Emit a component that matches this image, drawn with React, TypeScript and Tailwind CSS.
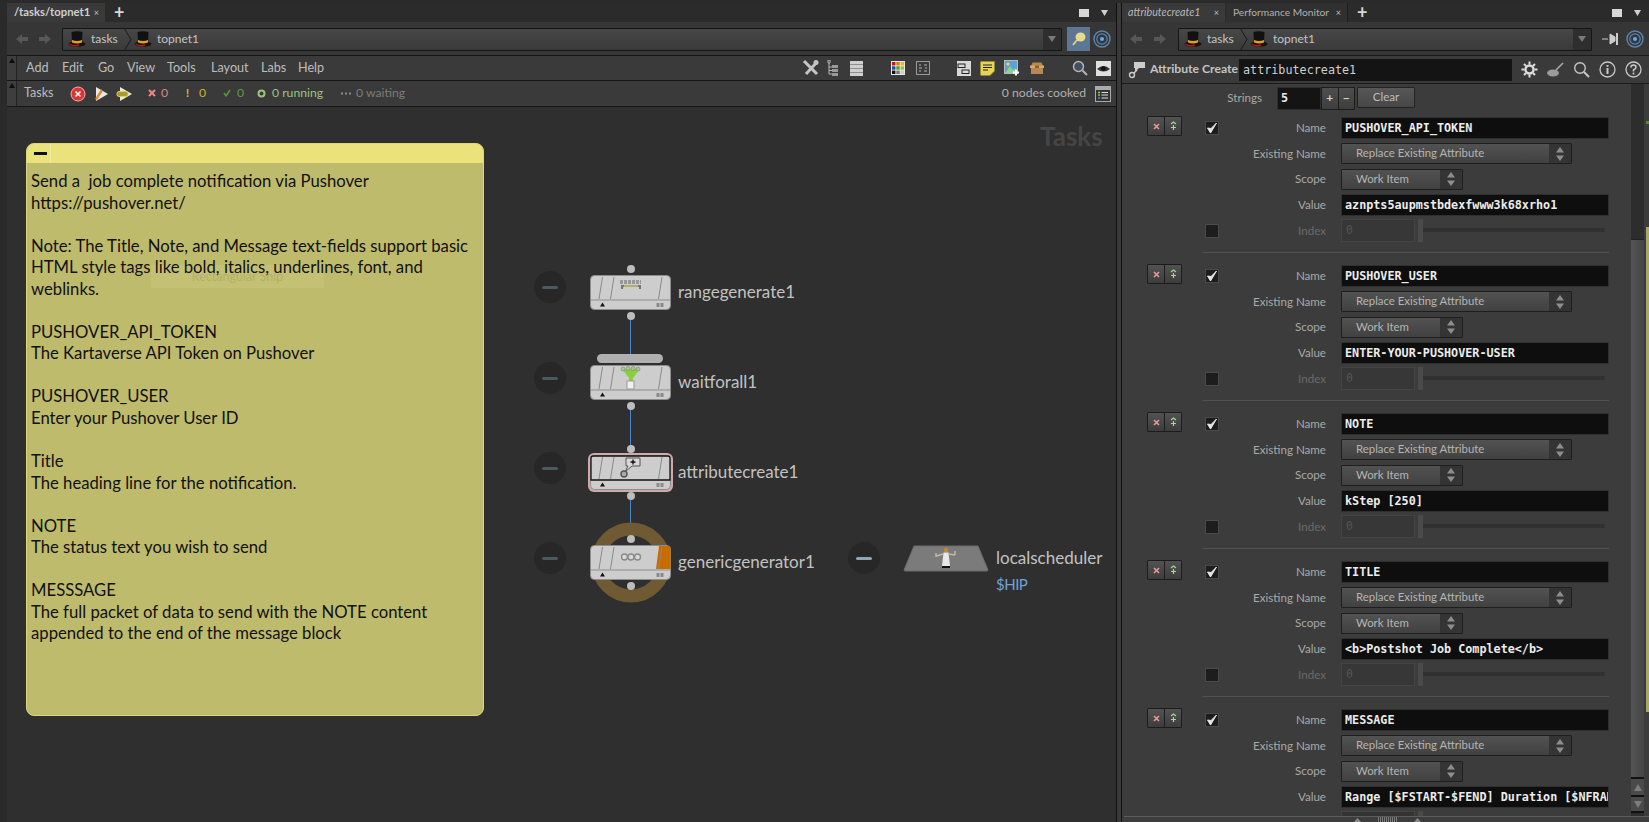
import React from "react";

const SANS = "font-['Lato',sans-serif]";
const MONO = "font-['DejaVu_Sans_Mono',monospace]";

const Hat = () => (
  <svg width="18" height="18" viewBox="0 0 18 18" className="shrink-0">
    <ellipse cx="9" cy="14" rx="8.5" ry="2.8" fill="#1a1210" />
    <path d="M3.5 2 Q9 0.5 14.5 2 L14 12 Q9 14 4 12 Z" fill="#111" />
    <path d="M4 10 Q9 12 14 10 L14 12.5 Q9 14.5 4 12.5 Z" fill="#e0a020" />
    <path d="M1.5 14 Q6 17 11 15" stroke="#a02020" strokeWidth="1.5" fill="none" />
  </svg>
);

const Arrow = ({ dir }: { dir: "l" | "r" }) => (
  <svg width="14" height="12" viewBox="0 0 14 12">
    <path d={dir === "l" ? "M1 6 L7 1 V4 H13 V8 H7 V11 Z" : "M13 6 L7 1 V4 H1 V8 H7 V11 Z"} fill="#575757" />
  </svg>
);

const PathBar = ({ cls }: { cls: string }) => (
  <div className={`${cls} h-[23px] flex items-center bg-gradient-to-b from-[#474747] to-[#3a3a3a] border border-[#151515] rounded-[1px]`}>
    <div className="flex items-center gap-[5px] pl-[5px] w-[60px]">
      <Hat />
      <span className="text-[12px] text-[#c4c4c4]">tasks</span>
    </div>
    <svg width="10" height="23" viewBox="0 0 10 23" className="shrink-0">
      <path d="M1 0 L8 11.5 L1 23" stroke="#1a1a1a" strokeWidth="1" fill="none" />
    </svg>
    <div className="flex items-center gap-[5px] pl-[1px] flex-1">
      <Hat />
      <span className="text-[12px] text-[#c4c4c4]">topnet1</span>
    </div>
    <div className="w-[18px] h-full bg-[#2e2e2e] flex items-center justify-center">
      <svg width="8" height="6" viewBox="0 0 8 6"><path d="M0 0 H8 L4 6 Z" fill="#7a7a7a" /></svg>
    </div>
  </div>
);

const Target = () => (
  <svg width="18" height="18" viewBox="0 0 18 18">
    <circle cx="9" cy="9" r="8" fill="none" stroke="#5d86ad" strokeWidth="1.4" />
    <circle cx="9" cy="9" r="5.2" fill="#2b3a4a" stroke="#5d86ad" strokeWidth="1.2" />
    <circle cx="9" cy="9" r="2" fill="#7aa6d0" />
  </svg>
);

const Close = () => <span className="text-[9px] leading-none text-[#bdbdbd]">×</span>;

const Handle = () => (
  <div className="w-[10px] h-full bg-[#3e3e3e] border-r border-[#222] flex justify-center pt-[2px]">
    <svg width="6" height="5" viewBox="0 0 6 5"><path d="M3 0 L6 5 H0 Z" fill="#0d0d0d" /></svg>
  </div>
);

const TabControls = () => (
  <div className="ml-auto flex items-center">
    <div className="w-[10px] h-[8px] bg-[#d8d8d8]" />
    <svg width="7" height="6" viewBox="0 0 7 6" className="ml-[12px] mr-[8px]"><path d="M0 0 H7 L3.5 6 Z" fill="#d0d0d0" /></svg>
  </div>
);

const Node = ({ x, y, orange, selected, children }: { x: number; y: number; orange?: boolean; selected?: boolean; children?: React.ReactNode }) => (
  <svg className="absolute" style={{ left: x - 3, top: y - 3 }} width="87" height="41" viewBox="-3 -3 87 41">
    {selected && <rect x="-2" y="-2" width="85" height="39" rx="6" fill="#d1a9aa" />}
    <rect x="0.5" y="0.5" width="80" height="34" rx="4" fill="#cdcdcd" stroke="#8d8d8d" />
    {orange && <path d="M69 1 H79 Q80.5 1 80.5 4 V24 H66 Z" fill="#c86c00" />}
    {selected ? (
      <path d="M1 25 V3 Q1 1 3 1 H78 Q80 1 80 3 V25 Z" fill="none" stroke="#111" strokeWidth="1.3" />
    ) : (
      <path d="M1 25 H80" stroke="#8d8d8d" strokeWidth="1" />
    )}
    <path d="M9 24 L12.5 2 M20.5 24 L24 2 M68.5 24 L72 2" stroke="#8a8a8a" strokeWidth="1" />
    <path d="M12.5 27.5 L15 31.5 H10 Z" fill="#111" />
    <path d="M66.5 28 H69.5 V32 H66.5 Z M70.5 28 H73.5 V32 H70.5 Z" fill="#8a8a8a" />
    {children}
  </svg>
);

const Dot = ({ y, x = 630.5 }: { y: number; x?: number }) => (
  <div className="absolute w-[8px] h-[8px] rounded-full bg-[#bdbdbd]" style={{ left: x - 4, top: y - 4 }} />
);

const Wire = ({ y1, y2 }: { y1: number; y2: number }) => (
  <div className="absolute w-[1px] bg-[#4a88cc]" style={{ left: 630, top: y1, height: y2 - y1 }} />
);

const Minus = ({ x, y, light }: { x: number; y: number; light?: boolean }) => (
  <div className="absolute w-[32px] h-[32px] rounded-full bg-[#272727] flex items-center justify-center" style={{ left: x - 16, top: y - 16 }}>
    <div className={`w-[16px] h-[3px] rounded-full ${light ? "bg-[#8ea6b4]" : "bg-[#4b5a60]"}`} />
  </div>
);

const NodeLabel = ({ x, y, children }: { x: number; y: number; children: React.ReactNode }) => (
  <div className="absolute text-[17px] leading-[20px] whitespace-nowrap text-[#c2c2c2]" style={{ left: x, top: y - 10 }}>
    {children}
  </div>
);

const noteLines = [
  "Send a  job complete notification via Pushover",
  "https://pushover.net/",
  "",
  "Note: The Title, Note, and Message text-fields support basic",
  "HTML style tags like bold, italics, underlines, font, and",
  "weblinks.",
  "",
  "PUSHOVER_API_TOKEN",
  "The Kartaverse API Token on Pushover",
  "",
  "PUSHOVER_USER",
  "Enter your Pushover User ID",
  "",
  "Title",
  "The heading line for the notification.",
  "",
  "NOTE",
  "The status text you wish to send",
  "",
  "MESSSAGE",
  "The full packet of data to send with the NOTE content",
  "appended to the end of the message block",
];

const Label = ({ children, dim }: { children: React.ReactNode; dim?: boolean }) => (
  <div className={`w-[107px] text-right text-[11.6px] ${dim ? "text-[#6a6a6a]" : "text-[#a9a9a9]"}`}>{children}</div>
);

const Lead = ({ buttons, box }: { buttons?: boolean; box?: "check" | "empty" }) => (
  <>
    <div className="w-[83px] h-full flex items-center pl-[25px]">
      {buttons && (
        <div className="flex h-[20px] w-[35px] mt-[-4px] border border-[#1c1c1c] rounded-[1px] bg-gradient-to-b from-[#525252] to-[#3d3d3d]">
          <div className="flex-1 border-r border-[#1c1c1c] flex items-center justify-center">
            <svg width="7" height="7" viewBox="0 0 7 7"><path d="M1 1 L6 6 M6 1 L1 6" stroke="#e89a9a" strokeWidth="1.6" /></svg>
          </div>
          <div className="flex-1 flex items-center justify-center">
            <svg width="7" height="10" viewBox="0 0 7 10"><path d="M1 3 L3.5 1 L6 3 M3.5 4 V9 M1 6.5 H6" stroke="#a8d89a" strokeWidth="1.2" fill="none" /></svg>
          </div>
        </div>
      )}
    </div>
    <div className="w-[14px] h-[14px] bg-[#1d1d1d] border border-[#4a4a4a] flex items-center justify-center">
      {box === "check" && (
        <svg width="12" height="12" viewBox="0 0 12 12"><path d="M1.5 6 L4.5 11 L10.5 1 L5 6.5 Z" fill="#e6e6e6" stroke="#e6e6e6" /></svg>
      )}
    </div>
  </>
);

const Select = ({ w, text }: { w: string; text: string }) => (
  <div className={`${w} h-[21px] flex bg-gradient-to-b from-[#525252] to-[#414141] border border-[#1e1e1e] rounded-[1px]`}>
    <div className="flex-1 pl-[14px] text-[11.4px] leading-[18px] text-[#b5b5b5] whitespace-nowrap">{text}</div>
    <div className="w-[22px] bg-[#343434] flex items-center justify-center">
      <svg width="8" height="14" viewBox="0 0 8 14"><path d="M4 0 L8 5.5 H0 Z M4 14 L8 8.5 H0 Z" fill="#8e8e8e" /></svg>
    </div>
  </div>
);

const ParmBlock = ({ name, value, last }: { name: string; value: string; last?: boolean }) => (
  <div className="h-[148px] shrink-0">
    <div className="h-[26px] flex items-center">
      <Lead buttons box="check" />
      <Label>Name</Label>
      <div className={`ml-[15px] w-[268px] h-[22px] bg-[#0e0e0e] border border-[#303030] pl-[3px] ${MONO} font-bold text-[11.75px] leading-[20px] text-[#ececec]`}>{name}</div>
    </div>
    <div className="h-[25px] flex items-center">
      <div className="w-[97px]" />
      <Label>Existing Name</Label>
      <div className="ml-[15px]"><Select w="w-[231px]" text="Replace Existing Attribute" /></div>
    </div>
    <div className="h-[26px] flex items-center">
      <div className="w-[97px]" />
      <Label>Scope</Label>
      <div className="ml-[15px]"><Select w="w-[122px]" text="Work Item" /></div>
    </div>
    <div className="h-[26px] flex items-center">
      <div className="w-[97px]" />
      <Label>Value</Label>
      <div className={`ml-[15px] w-[268px] h-[22px] bg-[#0e0e0e] border border-[#303030] pl-[3px] overflow-hidden whitespace-nowrap ${MONO} font-bold text-[11.75px] leading-[20px] text-[#ececec]`}>{value}</div>
    </div>
    {last ? (
      <div className="h-[25px] flex items-center">
        <div className="ml-[219px] w-[74px] h-[23px] bg-[#333] border border-[#444]" />
        <div className="ml-[3px] w-[5px] h-[23px] bg-[#4a4a4a]" />
      </div>
    ) : (
      <>
        <div className="h-[25px] flex items-center">
          <Lead box="empty" />
          <Label dim>Index</Label>
          <div className={`ml-[15px] w-[74px] h-[23px] bg-[#373737] border border-[#444] pl-[4px] ${MONO} text-[11.4px] leading-[21px] text-[#555]`}>0</div>
          <div className="relative ml-[3px] h-[23px] w-[188px]">
            <div className="absolute left-[2px] right-[1px] top-[9px] h-[4px] rounded-full bg-[#313131]" />
            <div className="absolute left-0 top-0 w-[5px] h-[23px] bg-[#4a4a4a]" />
          </div>
        </div>
        <div className="ml-[81px] w-[406px] mt-[9px] border-t border-[#515151]" />
      </>
    )}
  </div>
);

const ToolIcons = () => (
  <div className="ml-auto flex items-center h-full">
    <svg width="18" height="18" viewBox="0 0 18 18" className="mr-[7px]"><path d="M2 2 L15 15 M15 3 L4 15" stroke="#c5c5c5" strokeWidth="3" /><circle cx="14" cy="3.5" r="2.5" fill="#c5c5c5" /></svg>
    <svg width="12" height="16" viewBox="0 0 12 16" className="mr-[11px]"><path d="M1 0 H3 V3 H1 Z M2 3 V14 H5 M2 7 H5 M2 10.5 H5" stroke="#b5b5b5" fill="none" /><path d="M5 5 H11 V8 H5 Z M5 9 H11 V12 H5 Z M5 13 H11 V16 H5 Z" fill="#9a9a9a" /></svg>
    <div className="w-[13px] h-[15px] mr-[28px] bg-[repeating-linear-gradient(180deg,#d0d0d0_0,#d0d0d0_3px,#8f8f8f_3px,#8f8f8f_4px)]" />
    <svg width="14" height="14" viewBox="0 0 14 14" className="mr-[11px]">
      <rect width="14" height="14" fill="#e8e8e8" />
      <rect x="1" y="1" width="3.4" height="3.4" fill="#c01818" /><rect x="5.3" y="1" width="3.4" height="3.4" fill="#e07a10" /><rect x="9.6" y="1" width="3.4" height="3.4" fill="#e0c010" />
      <rect x="1" y="5.3" width="3.4" height="3.4" fill="#2050a0" /><rect x="5.3" y="5.3" width="3.4" height="3.4" fill="#50a030" /><rect x="9.6" y="5.3" width="3.4" height="3.4" fill="#a0c030" />
      <rect x="1" y="9.6" width="3.4" height="3.4" fill="#111" /><rect x="5.3" y="9.6" width="3.4" height="3.4" fill="#777" /><rect x="9.6" y="9.6" width="3.4" height="3.4" fill="#ccc" />
    </svg>
    <svg width="14" height="14" viewBox="0 0 14 14" className="mr-[27px]"><rect x="0.5" y="0.5" width="13" height="13" fill="#3a3a3a" stroke="#9a9a9a" /><path d="M3 4 H5 M8 4 H11 M3 7 H6 M9 7 H11 M3 10 H5 M8 10 H11" stroke="#b5b5b5" /></svg>
    <svg width="14" height="15" viewBox="0 0 14 15" className="mr-[9px]"><rect width="14" height="15" fill="#d8d8d8" /><rect x="1" y="3" width="7" height="3.5" fill="#d8d8d8" stroke="#222" /><rect x="5" y="9" width="7" height="3.5" fill="#d8d8d8" stroke="#222" /></svg>
    <svg width="15" height="15" viewBox="0 0 15 15" className="mr-[9px]"><path d="M0.5 1.5 Q0.5 0.5 1.5 0.5 H14.5 V10 L10 14.5 H1.5 Q0.5 14.5 0.5 13.5 Z" fill="#e6d55a" stroke="#9a8c30" /><path d="M3 4 H12 M3 6.5 H12 M3 9 H8" stroke="#222" strokeWidth="1.2" /></svg>
    <svg width="16" height="16" viewBox="0 0 16 16" className="mr-[9px]"><rect x="0.5" y="0.5" width="13" height="13" fill="#5ea0d0" stroke="#bbb" /><path d="M1 13 L6 6 L9 10 L11 8 L13 13 Z" fill="#8fcf90" /><circle cx="4" cy="4" r="1.6" fill="#f0e050" /><path d="M12 9.5 V15.5 M9 12.5 H15" stroke="#fff" strokeWidth="2" /></svg>
    <svg width="16" height="13" viewBox="0 0 16 13" className="mr-[27px]"><path d="M2 4 L3.5 0.5 H12.5 L14 4 V12 H2 Z" fill="#b98850" /><path d="M1 3.5 H15 V6 H1 Z" fill="#d8a868" /><rect x="6" y="3.5" width="4" height="2.5" fill="#8a6030" /></svg>
    <svg width="16" height="16" viewBox="0 0 16 16" className="mr-[8px]"><circle cx="6.5" cy="6.5" r="5" fill="#405060" stroke="#b5b5b5" strokeWidth="1.5" /><path d="M10.5 10.5 L15 15" stroke="#b5b5b5" strokeWidth="2" /></svg>
    <svg width="15" height="15" viewBox="0 0 15 15" className="mr-[5px]"><rect width="15" height="15" fill="#e0e0e0" /><path d="M1 8 Q7.5 2 14 8 Q7.5 13 1 8 Z" fill="#333" /><circle cx="7.5" cy="7.5" r="2.2" fill="#111" /></svg>
  </div>
);

export default function App() {
  return (
    <div className={`${SANS} w-[1649px] h-[822px] bg-[#2a2a2a] flex overflow-hidden pt-[3px] pl-[7px]`}>
      {/* Left pane */}
      <div className="w-[1110px] h-full flex flex-col shrink-0 border-r border-[#0f0f0f]">
        <div className="h-[19px] bg-[#2b2b2b] flex items-stretch shrink-0">
          <div className="w-[98px] bg-[#3a3a3a] flex items-center pl-[7px] pr-[6px] justify-between">
            <span className="text-[11.3px] text-[#d0d0d0] font-bold whitespace-nowrap">/tasks/topnet1</span>
            <Close />
          </div>
          <span className="ml-[9px] text-[18px] leading-[18px] font-bold text-[#d8d8d8]">+</span>
          <TabControls />
        </div>
        <div className="h-[33px] bg-[#363636] flex items-center shrink-0 pt-[1px]">
          <div className="w-[55px] pl-[8px] flex gap-[9px] shrink-0"><Arrow dir="l" /><Arrow dir="r" /></div>
          <PathBar cls="w-[1000px]" />
          <div className="ml-[5px] w-[23px] h-[24px] bg-[#5c7693] flex items-center justify-center shrink-0">
            <svg width="16" height="16" viewBox="0 0 16 16"><ellipse cx="9.5" cy="6" rx="5" ry="4.5" fill="#e6dc8a" /><path d="M6 9 L2 14" stroke="#d8cf80" strokeWidth="2" /></svg>
          </div>
          <div className="ml-[3px]"><Target /></div>
        </div>
        <div className="h-[26px] bg-[#3a3a3a] border-y border-[#151515] flex items-center shrink-0">
          <Handle />
          <div className="flex text-[12.6px] text-[#bdbdbd] h-full items-center">
            <span className="ml-[9px] w-[36px]">Add</span>
            <span className="w-[36px]">Edit</span>
            <span className="w-[29px]">Go</span>
            <span className="w-[40px]">View</span>
            <span className="w-[44px]">Tools</span>
            <span className="w-[50px]">Layout</span>
            <span className="w-[37px]">Labs</span>
            <span>Help</span>
          </div>
          <ToolIcons />
        </div>
        <div className="h-[26px] bg-[#3a3a3a] border-b border-[#151515] flex items-center shrink-0">
          <Handle />
          <span className="ml-[7px] w-[46px] text-[12.6px] text-[#bdbdbd]">Tasks</span>
          <svg width="16" height="16" viewBox="0 0 16 16"><circle cx="8" cy="8" r="7" fill="#d33" stroke="#f5b0b0" /><path d="M5.5 5.5 L10.5 10.5 M10.5 5.5 L5.5 10.5" stroke="#fff" strokeWidth="1.5" /></svg>
          <svg width="16" height="16" viewBox="0 0 16 16" className="ml-[7px]"><path d="M3 1 L15 8 L3 15 Z" fill="#e8e8e8" /><path d="M2 13 L8 3 L10 5 L4 14 Z" fill="#e08a30" /></svg>
          <svg width="17" height="16" viewBox="0 0 17 16" className="ml-[7px]"><path d="M4 1 L16 8 L4 15 Z" fill="#e8e8e8" /><rect x="1" y="5.5" width="11" height="5" rx="2" fill="#a89a30" stroke="#e0d050" /></svg>
          <div className="flex items-center text-[12.2px] ml-[15px]">
            <svg width="8" height="8" viewBox="0 0 8 8" className="mr-[2px]"><path d="M1 1 L7 7 M7 1 L1 7" stroke="#e88" strokeWidth="2" /></svg>
            <span className="text-[#d78888] ml-[3px] w-[25px]">0</span>
            <span className="text-[#d8c020] text-[11px] font-bold w-[10px]">!</span>
            <span className="text-[#c8b428] ml-[3px] w-[24px]">0</span>
            <svg width="8" height="8" viewBox="0 0 8 8" className="mr-[2px]"><path d="M1 4 L3 7 L7 1" stroke="#5c9a38" strokeWidth="1.4" fill="none" /></svg>
            <span className="text-[#5c9a38] ml-[4px] w-[20px]">0</span>
            <svg width="9" height="9" viewBox="0 0 9 9"><circle cx="4.5" cy="4.5" r="3" fill="none" stroke="#9cc47a" strokeWidth="2" /></svg>
            <span className="text-[#9cc47a] ml-[6px] w-[69px]">0 running</span>
            <svg width="10" height="3" viewBox="0 0 10 3" className="mr-[5px]"><path d="M0 1.5 H10" stroke="#8a8a8a" strokeWidth="2" strokeDasharray="2 2" /></svg>
            <span className="text-[#7d7d7d]">0 waiting</span>
          </div>
          <span className="ml-auto text-[12.2px] text-[#b0b0b0]">0 nodes cooked</span>
          <svg width="16" height="16" viewBox="0 0 16 16" className="ml-[9px] mr-[5px]"><rect x="0.5" y="0.5" width="15" height="15" fill="#333" stroke="#aaa" /><rect x="1" y="1" width="14" height="3" fill="#aaa" /><path d="M3 6.5 H5 M3 9 H5" stroke="#8c4" strokeWidth="1.4" /><path d="M3 12 H5" stroke="#48c" strokeWidth="1.4" /><path d="M6.5 6.5 H13 M6.5 9 H13 M6.5 12 H13" stroke="#ddd" strokeWidth="1.2" /></svg>
        </div>

        {/* Network canvas */}
        <div className="relative flex-1 bg-[#2f2f2f] overflow-hidden">
          <div className="absolute inset-0" style={{ transform: "translate(-7px,-108px)" }}>
            <div className="absolute left-[1040px] top-[122px] text-[26px] leading-[30px] font-bold text-[#454545]">Tasks</div>

            {/* Sticky note */}
            <div className="absolute left-[26px] top-[144px] w-[458px] h-[573px] rounded-[8px] overflow-hidden bg-[#bfbb6c] border border-[#dcd77a]">
              <div className="h-[19px] bg-[#ece27c] flex items-center">
                <div className="w-[24px] h-full border-r border-[#f3ec9c] flex items-center justify-center">
                  <div className="w-[13px] h-[3px] bg-[#111] ml-[3px]" />
                </div>
              </div>
              <div className="absolute left-[124px] top-[121px] w-[173px] h-[23px] bg-[#c4c174] text-center text-[12.5px] leading-[23px] text-[#b3b068]">Rectangular Snip</div>
              <div className="relative pl-[4px] pt-[8px] text-[16.7px] leading-[21.55px] text-[#111]">
                {noteLines.map((l, i) => (
                  <div key={i} className="h-[21.55px] whitespace-pre">{l}</div>
                ))}
              </div>
            </div>

            {/* Wires */}
            <Wire y1={317} y2={356} />
            <Wire y1={407} y2={450} />
            <Wire y1={497} y2={540} />

            {/* Ring behind generic generator */}
            <svg className="absolute" style={{ left: 590, top: 523 }} width="82" height="82" viewBox="0 0 82 82">
              <circle cx="41" cy="40.5" r="33.5" fill="none" stroke="#6f5a34" strokeWidth="13" />
            </svg>

            <Minus x={550} y={288} />
            <Minus x={550} y={379} />
            <Minus x={550} y={469} />
            <Minus x={550} y={559} />
            <Minus x={864} y={559} light />

            <Dot y={270} />
            <Node x={590} y={276}>
              <path d="M30 7 H51" stroke="#999" strokeWidth="4" strokeDasharray="3 1" />
              <path d="M32 14 V11 H50 V14" stroke="#777" strokeWidth="2" fill="none" />
              <path d="M34 11 H48" stroke="#c5c070" strokeWidth="1.5" />
            </Node>
            <Dot y={317} />

            <div className="absolute left-[597px] top-[355px] w-[66px] h-[9px] rounded-full bg-[#b0b0b0]" />
            <Node x={590} y={366}>
              <path d="M32 4 H50 L43 13 V16 H39 V13 Z" fill="#8bcf3c" />
              <rect x="37" y="16" width="7" height="8" fill="#f0f0f0" stroke="#999" />
              <circle cx="33" cy="4" r="2" fill="#a6c88c" stroke="#777" strokeWidth="0.5" /><circle cx="38" cy="3.5" r="2" fill="#a6c88c" stroke="#777" strokeWidth="0.5" /><circle cx="43" cy="3.5" r="2" fill="#a6c88c" stroke="#777" strokeWidth="0.5" /><circle cx="48" cy="4" r="2" fill="#a6c88c" stroke="#777" strokeWidth="0.5" />
            </Node>
            <Dot y={407} />

            <Dot y={450} />
            <Node x={590} y={456} selected>
              <path d="M36 3 H50 V11 H42 L35 17 L38 11 H36 Z" fill="#d8d8d8" stroke="#555" />
              <path d="M43 4.5 V9.5 M40.5 7 H45.5" stroke="#111" strokeWidth="1.4" />
              <circle cx="34" cy="19" r="3" fill="#aaa" stroke="#555" strokeWidth="1.4" />
            </Node>
            <Dot y={497} />

            <Dot y={540} />
            <Node x={590} y={546} orange>
              <circle cx="34.5" cy="12" r="3" fill="#d8d8d8" stroke="#888" strokeWidth="1.3" />
              <circle cx="41" cy="12" r="3" fill="#d8d8d8" stroke="#888" strokeWidth="1.3" />
              <circle cx="47.5" cy="12" r="3" fill="#d8d8d8" stroke="#888" strokeWidth="1.3" />
            </Node>
            <Dot y={587} />

            <NodeLabel x={678} y={293}>rangegenerate1</NodeLabel>
            <NodeLabel x={678} y={383}>waitforall1</NodeLabel>
            <NodeLabel x={678} y={473}>attributecreate1</NodeLabel>
            <NodeLabel x={678} y={563}>genericgenerator1</NodeLabel>

            {/* Scheduler */}
            <svg className="absolute" style={{ left: 903, top: 546 }} width="86" height="27" viewBox="0 0 86 27">
              <path d="M11 1 H75 L85 25 Q85 26 83 26 H3 Q1 26 1 25 Z" fill="#7b7b7b" stroke="#6c6c6c" />
              <circle cx="43" cy="5" r="2.2" fill="#c88a30" />
              <path d="M40.5 7.5 H45.5 L47 21 H39 Z" fill="#e8e8e8" />
              <path d="M40.5 9 L33 11 M45.5 9 L52 10 M33 8 V12 M52 6 V10" stroke="#c9b8a0" strokeWidth="1.4" fill="none" />
              <path d="M39 21 H47 V23 H39 Z" fill="#111" />
            </svg>
            <NodeLabel x={996} y={559}>localscheduler</NodeLabel>
            <div className="absolute left-[996px] top-[575px] text-[15px] leading-[20px] tracking-[-0.5px] text-[#6ea3db]">$HIP</div>
          </div>
        </div>
      </div>

      {/* Gap between panes */}
      <div className="w-[5px] h-full bg-[#3a3a3a] border-r border-[#0f0f0f] shrink-0" />

      {/* Right pane */}
      <div className="w-[527px] h-full flex flex-col shrink-0">
        <div className="h-[19px] bg-[#2b2b2b] flex items-stretch shrink-0">
          <div className="w-[103px] bg-[#3a3a3a] flex items-center pl-[6px] pr-[6px] justify-between">
            <span className="text-[10.7px] italic text-[#b8b8b8] whitespace-nowrap">attributecreate1</span>
            <Close />
          </div>
          <div className="w-[122px] ml-[1px] bg-[#303030] border-r border-[#1d1d1d] flex items-center pl-[7px] pr-[6px] justify-between">
            <span className="text-[10.2px] text-[#b0b0b0] whitespace-nowrap">Performance Monitor</span>
            <Close />
          </div>
          <span className="ml-[9px] text-[18px] leading-[18px] font-bold text-[#d8d8d8]">+</span>
          <TabControls />
        </div>
        <div className="h-[33px] bg-[#363636] flex items-center shrink-0 pt-[1px]">
          <div className="w-[56px] pl-[7px] flex gap-[10px] shrink-0"><Arrow dir="l" /><Arrow dir="r" /></div>
          <PathBar cls="w-[414px]" />
          <svg width="18" height="14" viewBox="0 0 18 14" className="ml-[10px]"><path d="M0 7 H6 M8 2 L8 12 L13 9 V5 Z" stroke="#ccc" fill="#ccc" /><rect x="14" y="1" width="2" height="12" fill="#ccc" /></svg>
          <div className="ml-[6px]"><Target /></div>
        </div>
        <div className="h-[29px] bg-[#3a3a3a] border-y border-[#1a1a1a] flex items-center shrink-0">
          <svg width="20" height="20" viewBox="0 0 20 20" className="ml-[6px]"><path d="M6 2 H17 V8 H11 L7 12 V8 H6 Z" fill="#ccc" /><circle cx="4" cy="15" r="2.5" fill="none" stroke="#ccc" strokeWidth="1.4" /><path d="M6 13 L9 10" stroke="#ccc" strokeWidth="1.4" /></svg>
          <span className="ml-[2px] w-[89px] text-[12.2px] font-bold text-[#c4c4c4] whitespace-nowrap">Attribute Create</span>
          <div className={`w-[273px] h-[22px] bg-[#141414] pl-[4px] ${MONO} text-[11.75px] leading-[22px] text-[#d0d0d0]`}>attributecreate1</div>
          <div className="flex items-center ml-[9px] gap-[9px]">
            <svg width="17" height="17" viewBox="0 0 17 17"><circle cx="8.5" cy="8.5" r="4" fill="none" stroke="#ddd" strokeWidth="2.4" /><path d="M8.5 0.5 V3.5 M8.5 13.5 V16.5 M0.5 8.5 H3.5 M13.5 8.5 H16.5 M3 3 L5 5 M12 12 L14 14 M14 3 L12 5 M3 14 L5 12" stroke="#ddd" strokeWidth="2" /></svg>
            <svg width="17" height="17" viewBox="0 0 17 17"><ellipse cx="6" cy="12" rx="6" ry="3.5" fill="#9b9b9b" /><path d="M9 9 L16 2" stroke="#aaa" strokeWidth="1.6" /></svg>
            <svg width="17" height="17" viewBox="0 0 17 17"><circle cx="7" cy="7" r="5.3" fill="none" stroke="#c8c8c8" strokeWidth="1.4" /><path d="M11 11 L16 16" stroke="#c8c8c8" strokeWidth="2" /></svg>
            <svg width="17" height="17" viewBox="0 0 17 17"><circle cx="8.5" cy="8.5" r="7.5" fill="none" stroke="#c8c8c8" strokeWidth="1.3" /><path d="M8.5 7 V13 M8.5 4 V5.8" stroke="#c8c8c8" strokeWidth="2" /></svg>
            <svg width="17" height="17" viewBox="0 0 17 17"><circle cx="8.5" cy="8.5" r="7.5" fill="none" stroke="#c8c8c8" strokeWidth="1.3" /><path d="M6 6.5 Q6 4 8.5 4 Q11 4 11 6.3 Q11 7.8 8.5 9 V10.5 M8.5 11.5 V13.5" stroke="#c8c8c8" strokeWidth="1.6" fill="none" /></svg>
          </div>
        </div>

        <div className="relative flex-1 bg-[#3c3c3c] overflow-hidden">
          <div className="h-[31px] flex items-center pb-[3px]">
            <div className="w-[140px] text-right text-[11.6px] text-[#a9a9a9]">Strings</div>
            <div className={`ml-[15px] w-[44px] h-[23px] bg-[#141414] border border-[#2e2e2e] pl-[3px] ${MONO} font-bold text-[11.75px] leading-[21px] text-[#e8e8e8]`}>5</div>
            <div className="flex w-[34px] h-[23px] border border-[#1c1c1c] bg-gradient-to-b from-[#4e4e4e] to-[#3e3e3e] text-[12px] text-[#d0d0d0] font-bold leading-[20px] text-center">
              <div className="flex-1 border-r border-[#1c1c1c]">+</div>
              <div className="flex-1">−</div>
            </div>
            <div className="ml-[2px] w-[58px] h-[21px] mb-[2px] border border-[#222] rounded-[1px] bg-gradient-to-b from-[#575757] to-[#474747] text-center text-[11.6px] leading-[18px] text-[#bcbcbc]">Clear</div>
          </div>
          <ParmBlock name="PUSHOVER_API_TOKEN" value="aznpts5aupmstbdexfwww3k68xrho1" />
          <ParmBlock name="PUSHOVER_USER" value="ENTER-YOUR-PUSHOVER-USER" />
          <ParmBlock name="NOTE" value="kStep [250]" />
          <ParmBlock name="TITLE" value="<b>Postshot Job Complete</b>" />
          <ParmBlock name="MESSAGE" value="Range [$FSTART-$FEND] Duration [$NFRAMES] Frames" last />

          {/* Scrollbar overlay */}
          <div className="absolute left-[509px] top-0 bottom-0 w-[13px] bg-[#2d2d2d]">
            <div className="absolute left-0 right-0 top-[155px] bottom-[45px] bg-gradient-to-r from-[#555] to-[#454545] border-t border-[#222]" />
            <div className="absolute left-0 right-0 bottom-[27px] h-[18px] bg-[#4a4a4a] flex items-center justify-center border-t-2 border-[#111]">
              <svg width="8" height="7" viewBox="0 0 8 7"><path d="M4 0 L8 7 H0 Z" fill="#7d7d7d" /></svg>
            </div>
            <div className="absolute left-0 right-0 bottom-[9px] h-[18px] bg-[#4a4a4a] flex items-center justify-center border-y-2 border-[#111]">
              <svg width="8" height="7" viewBox="0 0 8 7"><path d="M0 0 H8 L4 7 Z" fill="#7d7d7d" /></svg>
            </div>
          </div>
          {/* Right edge strip */}
          <div className="absolute left-[524px] top-[143px] h-[485px] w-[3px] bg-[#a9a768]" />
          <div className="absolute left-[524px] top-[37px] h-[3px] w-[3px] bg-[#4f8a2c]" />
          {/* Bottom splitter */}
          <div className="absolute left-[2px] right-0 bottom-0 h-[6px] bg-[#3c3c3c] border-t border-[#5c5c5c]">
            <svg width="7" height="4" viewBox="0 0 7 4" className="absolute left-[230px] top-[1px]"><path d="M3.5 0 L7 4 H0 Z" fill="#8a8a8a" /></svg>
            <div className="absolute left-[254px] top-[0px] w-[20px] h-[5px] bg-[repeating-linear-gradient(90deg,#7a7a7a_0,#7a7a7a_1px,transparent_1px,transparent_2px)]" />
            <svg width="7" height="4" viewBox="0 0 7 4" className="absolute left-[290px] top-[1px]"><path d="M3.5 0 L7 4 H0 Z" fill="#8a8a8a" /></svg>
          </div>
        </div>
      </div>
    </div>
  );
}
